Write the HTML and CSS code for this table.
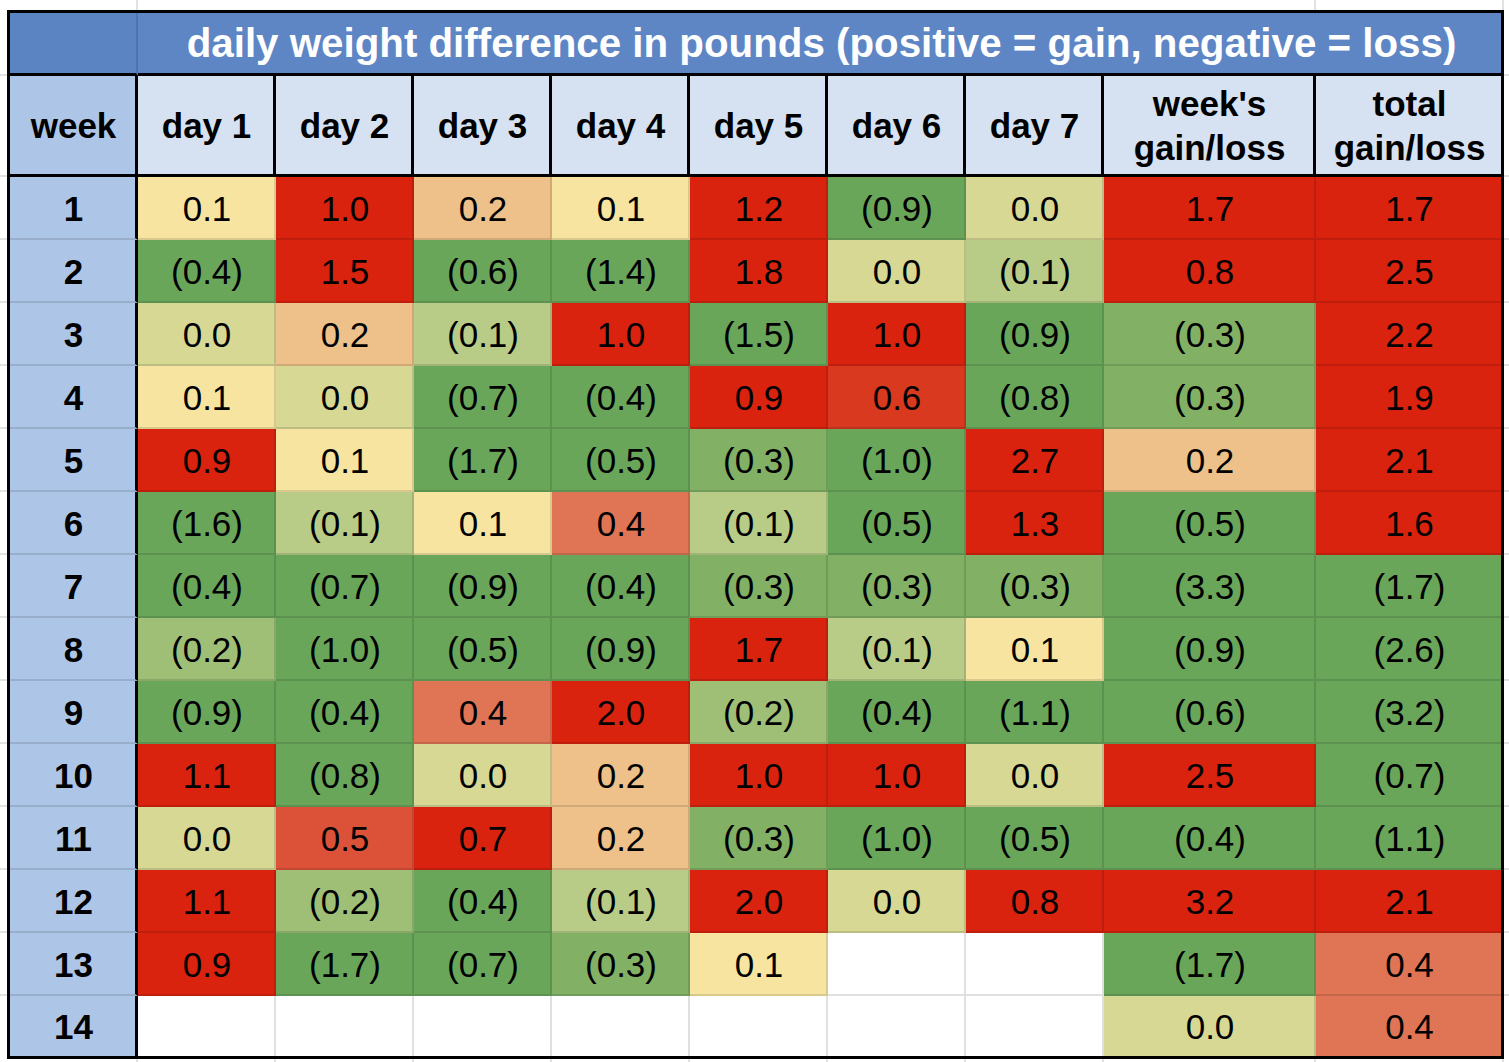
FILE: index.html
```html
<!DOCTYPE html>
<html lang="en">
<head>
<meta charset="utf-8">
<title>daily weight difference</title>
<link rel="stylesheet" href="styles.css">
</head>
<body>
<div class="sheet">
  <div class="corner"></div>
  <div class="title">daily weight difference in pounds (positive = gain, negative = loss)</div>

  <div class="hd wkh">week</div>
  <div class="hd">day 1</div>
  <div class="hd">day 2</div>
  <div class="hd">day 3</div>
  <div class="hd">day 4</div>
  <div class="hd">day 5</div>
  <div class="hd">day 6</div>
  <div class="hd">day 7</div>
  <div class="hd">week's<br>gain/loss</div>
  <div class="hd end">total<br>gain/loss</div>

  <div class="cell wk">1</div>
  <div class="cell y1">0.1</div><div class="cell r7">1.0</div><div class="cell o2">0.2</div><div class="cell y1">0.1</div><div class="cell r7">1.2</div><div class="cell g4">(0.9)</div><div class="cell z">0.0</div><div class="cell r7">1.7</div><div class="cell r7 end">1.7</div>

  <div class="cell wk">2</div>
  <div class="cell g4">(0.4)</div><div class="cell r7">1.5</div><div class="cell g4">(0.6)</div><div class="cell g4">(1.4)</div><div class="cell r7">1.8</div><div class="cell z">0.0</div><div class="cell g1">(0.1)</div><div class="cell r7">0.8</div><div class="cell r7 end">2.5</div>

  <div class="cell wk">3</div>
  <div class="cell z">0.0</div><div class="cell o2">0.2</div><div class="cell g1">(0.1)</div><div class="cell r7">1.0</div><div class="cell g4">(1.5)</div><div class="cell r7">1.0</div><div class="cell g4">(0.9)</div><div class="cell g3">(0.3)</div><div class="cell r7 end">2.2</div>

  <div class="cell wk">4</div>
  <div class="cell y1">0.1</div><div class="cell z">0.0</div><div class="cell g4">(0.7)</div><div class="cell g4">(0.4)</div><div class="cell r7">0.9</div><div class="cell r6">0.6</div><div class="cell g4">(0.8)</div><div class="cell g3">(0.3)</div><div class="cell r7 end">1.9</div>

  <div class="cell wk">5</div>
  <div class="cell r7">0.9</div><div class="cell y1">0.1</div><div class="cell g4">(1.7)</div><div class="cell g4">(0.5)</div><div class="cell g3">(0.3)</div><div class="cell g4">(1.0)</div><div class="cell r7">2.7</div><div class="cell o2">0.2</div><div class="cell r7 end">2.1</div>

  <div class="cell wk">6</div>
  <div class="cell g4">(1.6)</div><div class="cell g1">(0.1)</div><div class="cell y1">0.1</div><div class="cell o4">0.4</div><div class="cell g1">(0.1)</div><div class="cell g4">(0.5)</div><div class="cell r7">1.3</div><div class="cell g4">(0.5)</div><div class="cell r7 end">1.6</div>

  <div class="cell wk">7</div>
  <div class="cell g4">(0.4)</div><div class="cell g4">(0.7)</div><div class="cell g4">(0.9)</div><div class="cell g4">(0.4)</div><div class="cell g3">(0.3)</div><div class="cell g3">(0.3)</div><div class="cell g3">(0.3)</div><div class="cell g4">(3.3)</div><div class="cell g4 end">(1.7)</div>

  <div class="cell wk">8</div>
  <div class="cell g2">(0.2)</div><div class="cell g4">(1.0)</div><div class="cell g4">(0.5)</div><div class="cell g4">(0.9)</div><div class="cell r7">1.7</div><div class="cell g1">(0.1)</div><div class="cell y1">0.1</div><div class="cell g4">(0.9)</div><div class="cell g4 end">(2.6)</div>

  <div class="cell wk">9</div>
  <div class="cell g4">(0.9)</div><div class="cell g4">(0.4)</div><div class="cell o4">0.4</div><div class="cell r7">2.0</div><div class="cell g2">(0.2)</div><div class="cell g4">(0.4)</div><div class="cell g4">(1.1)</div><div class="cell g4">(0.6)</div><div class="cell g4 end">(3.2)</div>

  <div class="cell wk">10</div>
  <div class="cell r7">1.1</div><div class="cell g4">(0.8)</div><div class="cell z">0.0</div><div class="cell o2">0.2</div><div class="cell r7">1.0</div><div class="cell r7">1.0</div><div class="cell z">0.0</div><div class="cell r7">2.5</div><div class="cell g4 end">(0.7)</div>

  <div class="cell wk">11</div>
  <div class="cell z">0.0</div><div class="cell r5">0.5</div><div class="cell r7">0.7</div><div class="cell o2">0.2</div><div class="cell g3">(0.3)</div><div class="cell g4">(1.0)</div><div class="cell g4">(0.5)</div><div class="cell g4">(0.4)</div><div class="cell g4 end">(1.1)</div>

  <div class="cell wk">12</div>
  <div class="cell r7">1.1</div><div class="cell g2">(0.2)</div><div class="cell g4">(0.4)</div><div class="cell g1">(0.1)</div><div class="cell r7">2.0</div><div class="cell z">0.0</div><div class="cell r7">0.8</div><div class="cell r7">3.2</div><div class="cell r7 end">2.1</div>

  <div class="cell wk">13</div>
  <div class="cell r7">0.9</div><div class="cell g4">(1.7)</div><div class="cell g4">(0.7)</div><div class="cell g3">(0.3)</div><div class="cell y1">0.1</div><div class="cell e"></div><div class="cell e"></div><div class="cell g4">(1.7)</div><div class="cell o4 end">0.4</div>

  <div class="cell wk last">14</div>
  <div class="cell e last"></div><div class="cell e last"></div><div class="cell e last"></div><div class="cell e last"></div><div class="cell e last"></div><div class="cell e last"></div><div class="cell e last"></div><div class="cell z last">0.0</div><div class="cell o4 end last">0.4</div>
</div>
</body>
</html>
```

FILE: styles.css
```css
* {
  box-sizing: border-box;
}

html,
body {
  margin: 0;
  padding: 0;
}

body {
  width: 1509px;
  height: 1062px;
  overflow: hidden;
  font-family: "Liberation Sans", Arial, sans-serif;
  color: #000;
  background:
    linear-gradient(#e1e1e1, #e1e1e1) 136px 0 / 2px 100% no-repeat,
    linear-gradient(#e1e1e1, #e1e1e1) 1314px 0 / 2px 100% no-repeat,
    linear-gradient(#e1e1e1, #e1e1e1) 1502px 0 / 2px 100% no-repeat,
    linear-gradient(#e1e1e1, #e1e1e1) 274px 1056px / 2px 10px no-repeat,
    linear-gradient(#e1e1e1, #e1e1e1) 412px 1056px / 2px 10px no-repeat,
    linear-gradient(#e1e1e1, #e1e1e1) 550px 1056px / 2px 10px no-repeat,
    linear-gradient(#e1e1e1, #e1e1e1) 688px 1056px / 2px 10px no-repeat,
    linear-gradient(#e1e1e1, #e1e1e1) 826px 1056px / 2px 10px no-repeat,
    linear-gradient(#e1e1e1, #e1e1e1) 964px 1056px / 2px 10px no-repeat,
    linear-gradient(#e1e1e1, #e1e1e1) 1102px 1056px / 2px 10px no-repeat,
    linear-gradient(#e1e1e1, #e1e1e1) 0 74px / 100% 2px no-repeat,
    linear-gradient(#e1e1e1, #e1e1e1) 0 175px / 100% 2px no-repeat,
    linear-gradient(#e1e1e1, #e1e1e1) 0 238px / 100% 2px no-repeat,
    linear-gradient(#e1e1e1, #e1e1e1) 0 301px / 100% 2px no-repeat,
    linear-gradient(#e1e1e1, #e1e1e1) 0 364px / 100% 2px no-repeat,
    linear-gradient(#e1e1e1, #e1e1e1) 0 427px / 100% 2px no-repeat,
    linear-gradient(#e1e1e1, #e1e1e1) 0 490px / 100% 2px no-repeat,
    linear-gradient(#e1e1e1, #e1e1e1) 0 553px / 100% 2px no-repeat,
    linear-gradient(#e1e1e1, #e1e1e1) 0 616px / 100% 2px no-repeat,
    linear-gradient(#e1e1e1, #e1e1e1) 0 679px / 100% 2px no-repeat,
    linear-gradient(#e1e1e1, #e1e1e1) 0 742px / 100% 2px no-repeat,
    linear-gradient(#e1e1e1, #e1e1e1) 0 805px / 100% 2px no-repeat,
    linear-gradient(#e1e1e1, #e1e1e1) 0 868px / 100% 2px no-repeat,
    linear-gradient(#e1e1e1, #e1e1e1) 0 931px / 100% 2px no-repeat,
    linear-gradient(#e1e1e1, #e1e1e1) 0 994px / 100% 2px no-repeat,
    #fff;
}

.sheet {
  display: grid;
  grid-template-columns: 128px repeat(7, 138px) 212px 185px;
  grid-template-rows: 63px 101px repeat(13, 63px) 60px;
  width: 1497px;
  margin: 10px 0 0 7px;
  border: 3px solid #000;
}

.corner {
  background: #5b84c3;
  border-right: 2px solid #4e74b0;
  border-bottom: 3px solid #000;
}

.title {
  grid-column: span 9;
  display: flex;
  align-items: center;
  justify-content: center;
  padding: 2px 0 0 4px;
  background: #5e86c5;
  color: #fff;
  font-weight: bold;
  font-size: 40.3px;
  border-bottom: 3px solid #000;
  white-space: nowrap;
}

.hd {
  display: flex;
  align-items: center;
  justify-content: center;
  text-align: center;
  padding: 2px 0 0 2px;
  background: #d6e2f2;
  font-weight: bold;
  font-size: 35px;
  line-height: 1.27;
  border-right: 3px solid #000;
  border-bottom: 3px solid #000;
}

.hd.wkh {
  background: #adc6e8;
}

.hd.end {
  border-right: 0;
}

.cell {
  display: flex;
  align-items: center;
  justify-content: center;
  padding: 2px 0 0 2px;
  font-size: 35px;
  border-right: 2px solid rgba(0, 0, 0, 0.12);
  border-bottom: 2px solid rgba(0, 0, 0, 0.12);
}

.cell.end {
  border-right: 0;
}

.cell.last {
  border-bottom: 0;
}

.wk {
  background: #adc6e8;
  font-weight: bold;
  border-right: 3px solid #000;
}

.cell.wk {
  border-right: 3px solid #000;
}

.g4 { background: #6aa65a; }
.g3 { background: #82b065; }
.g2 { background: #9fbf76; }
.g1 { background: #b8cc88; }
.z  { background: #d7d894; }
.y1 { background: #f6e4a0; }
.o2 { background: #edc189; }
.o4 { background: #df7555; }
.r5 { background: #dc5239; }
.r6 { background: #d9391f; }
.r7 { background: #d9230f; }
.e  { background: #fff; }
```
